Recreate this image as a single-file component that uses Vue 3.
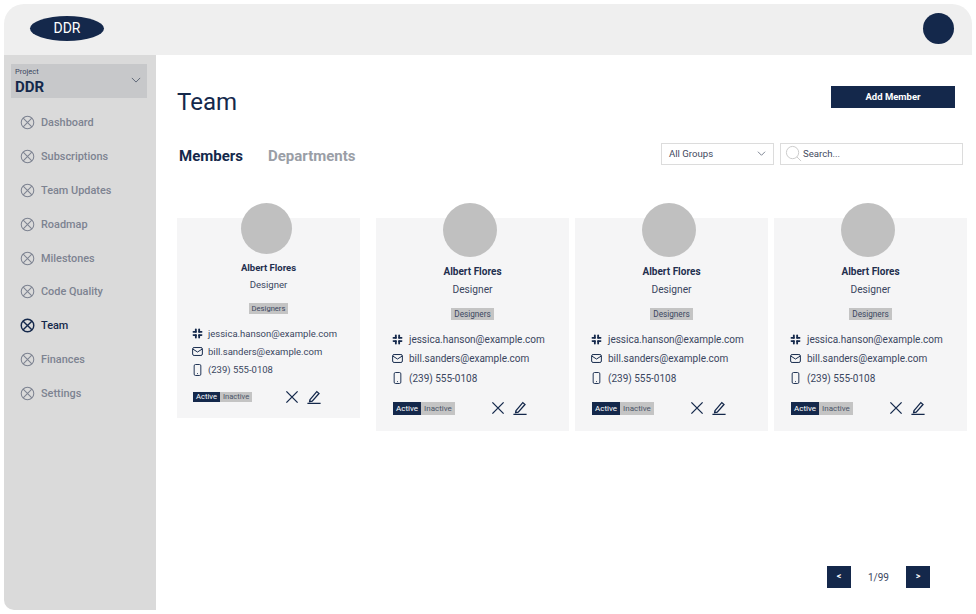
<template>
  <div class="frame">
    <header class="topbar">
      <div class="logo">DDR</div>
      <div class="user-avatar"></div>
    </header>

    <div class="body">
      <aside class="sidebar">
        <div class="project">
          <div>
            <div class="project-label">Project</div>
            <div class="project-name">DDR</div>
          </div>
          <svg class="chev" viewBox="0 0 12 7" width="10" height="6"><path d="M1 1l5 5 5-5"/></svg>
        </div>
        <nav class="nav">
          <a v-for="item in navItems" :key="item" class="nav-item" :class="{ active: item === 'Team' }">
            <svg viewBox="0 0 16 16" width="15" height="15">
              <circle cx="8" cy="8" r="6.7"/>
              <path d="M3.4 3.4l9.2 9.2M12.6 3.4l-9.2 9.2"/>
            </svg>
            <span>{{ item }}</span>
          </a>
        </nav>
      </aside>

      <main class="content">
        <div class="title-row">
          <h1>Team</h1>
          <button class="add-btn">Add Member</button>
        </div>

        <div class="tabs-row">
          <div class="tabs">
            <span class="tab current">Members</span>
            <span class="tab">Departments</span>
          </div>
          <div class="filters">
            <div class="select">
              <span>All Groups</span>
              <svg viewBox="0 0 12 7" width="9" height="5"><path d="M1 1l5 5 5-5"/></svg>
            </div>
            <div class="search">
              <svg viewBox="0 0 18 18" width="17" height="17">
                <circle cx="8" cy="8" r="6.5"/>
                <path d="M12.6 12.6l4.4 4.4"/>
              </svg>
              <span>Search...</span>
            </div>
          </div>
        </div>

        <div class="cards">
          <div v-for="(card, i) in cards" :key="i" class="card" :class="{ small: i === 0 }">
            <div class="avatar"></div>
            <div class="name">{{ card.name }}</div>
            <div class="role">{{ card.role }}</div>
            <span class="group">{{ card.group }}</span>
            <ul class="contacts">
              <li>
                <svg viewBox="0 0 12 12" width="11" height="11" class="slack">
                  <rect x="3.2" y="0.6" width="2" height="4.6" rx="1"/>
                  <rect x="0.6" y="3.4" width="4.6" height="1.8" rx="0.9"/>
                  <rect x="6.8" y="3.4" width="4.6" height="1.8" rx="0.9"/>
                  <rect x="6.8" y="0.6" width="2" height="4.6" rx="1"/>
                  <rect x="6.8" y="6.8" width="2" height="4.6" rx="1"/>
                  <rect x="6.8" y="6.8" width="4.6" height="1.8" rx="0.9"/>
                  <rect x="0.6" y="6.8" width="4.6" height="1.8" rx="0.9"/>
                  <rect x="3.2" y="6.8" width="2" height="4.6" rx="1"/>
                </svg>
                <span>{{ card.slack }}</span>
              </li>
              <li>
                <svg viewBox="0 0 12 10" width="11" height="9" class="line">
                  <rect x="0.6" y="0.6" width="10.8" height="8.8" rx="1.6"/>
                  <path d="M1 2.4l5 3.2 5-3.2"/>
                </svg>
                <span>{{ card.email }}</span>
              </li>
              <li>
                <svg viewBox="0 0 11 14" width="11" height="12" class="line">
                  <rect x="1.6" y="0.6" width="7.8" height="12.8" rx="1.6"/>
                  <path d="M5 11.2h1"/>
                </svg>
                <span>{{ card.phone }}</span>
              </li>
            </ul>
            <div class="card-foot">
              <div class="status">
                <span class="on">Active</span>
                <span class="off">Inactive</span>
              </div>
              <div class="actions">
                <svg viewBox="0 0 14 14" width="14" height="14" class="line thick"><path d="M1.4 1.4l11.2 11.2M12.6 1.4L1.4 12.6"/></svg>
                <svg viewBox="0 0 14 14" width="14" height="14" class="line thick">
                  <path d="M3 9.6L9.8 1.6l2.2 1.9-6.8 7.6-2.6.6z"/>
                  <path d="M0.4 13.4h13.2"/>
                </svg>
              </div>
            </div>
          </div>
        </div>

        <div class="pager">
          <button class="page-btn">&lt;</button>
          <span class="page-num">1/99</span>
          <button class="page-btn">&gt;</button>
        </div>
      </main>
    </div>
  </div>
</template>

<script setup>
const navItems = [
  'Dashboard',
  'Subscriptions',
  'Team Updates',
  'Roadmap',
  'Milestones',
  'Code Quality',
  'Team',
  'Finances',
  'Settings'
]

const member = {
  name: 'Albert Flores',
  role: 'Designer',
  group: 'Designers',
  slack: 'jessica.hanson@example.com',
  email: 'bill.sanders@example.com',
  phone: '(239) 555-0108'
}

const cards = [member, member, member, member]
</script>

<style>
html, body {
  margin: 0;
  background: #fff;
}
</style>

<style scoped>
.frame {
  width: 968px;
  height: 606px;
  margin: 4px 0 0 4px;
  border-radius: 20px 20px 0 10px;
  overflow: hidden;
  display: flex;
  flex-direction: column;
  font-family: Roboto, "Liberation Sans", sans-serif;
  color: #14284b;
  background: #fff;
}

/* Top bar */
.topbar {
  height: 51px;
  flex: none;
  box-sizing: border-box;
  background: #efefef;
  display: flex;
  align-items: center;
  justify-content: space-between;
  padding: 0 18px 2px 26px;
}

.logo {
  width: 74px;
  height: 25px;
  border-radius: 50%;
  background: #14284b;
  color: #fff;
  font-size: 14px;
  line-height: 25px;
  text-align: center;
}

.user-avatar {
  width: 31px;
  height: 31px;
  border-radius: 50%;
  background: #14284b;
}

.body {
  flex: 1;
  display: flex;
  min-height: 0;
}

/* Sidebar */
.sidebar {
  width: 152px;
  flex: none;
  background: #dadada;
  padding: 9px 9px 0 7px;
  box-sizing: border-box;
}

.project {
  height: 34px;
  background: #c7c8ca;
  display: flex;
  align-items: center;
  justify-content: space-between;
  padding: 0 6px 0 4px;
}

.project-label {
  font-size: 7.5px;
  line-height: 9px;
  color: #3a4660;
}

.project-name {
  margin-top: 3px;
  font-size: 15px;
  font-weight: 700;
  line-height: 17px;
}

.chev {
  margin-bottom: 3px;
  fill: none;
  stroke: #4b5568;
  stroke-width: 1;
}

.nav {
  margin-top: 8px;
  display: flex;
  flex-direction: column;
}

.nav-item {
  height: 33.8px;
  display: flex;
  align-items: center;
  gap: 6px;
  padding-left: 9px;
  font-size: 10.9px;
  font-weight: 500;
  color: #7d8391;
}

.nav-item svg {
  fill: none;
  stroke: currentColor;
  stroke-width: 1.1;
}

.nav-item.active {
  color: #14284b;
}

.nav-item.active svg {
  stroke-width: 1.5;
}

/* Main */
.content {
  flex: 1;
  min-width: 0;
  padding: 31px 5px 0 21px;
  position: relative;
  display: flex;
  flex-direction: column;
}

.title-row {
  display: flex;
  justify-content: space-between;
  align-items: flex-start;
  height: 59px;
}

h1 {
  margin: 0;
  font-size: 24px;
  font-weight: 400;
  line-height: 32px;
}

.add-btn {
  margin: 0 12px 0 0;
  width: 124px;
  height: 22px;
  border: none;
  padding: 0 0 2px;
  background: #14284b;
  color: #fff;
  font-family: inherit;
  font-size: 9.5px;
  font-weight: 700;
}

.tabs-row {
  display: flex;
  justify-content: space-between;
  align-items: center;
  height: 22px;
}

.tabs {
  display: flex;
  gap: 25px;
  padding-left: 2px;
}

.tab {
  font-size: 15px;
  font-weight: 700;
  color: #9a9ea6;
}

.tab.current {
  color: #14284b;
}

.filters {
  display: flex;
  gap: 6px;
  margin-top: -5px;
  padding-right: 4px;
}

.select,
.search {
  height: 22px;
  box-sizing: border-box;
  border: 1px solid #dcdcdc;
  background: #fff;
  display: flex;
  align-items: center;
  font-size: 9.6px;
  color: #3f4a60;
}

.select {
  width: 113px;
  padding: 0 7px;
  justify-content: space-between;
}

.select svg {
  fill: none;
  stroke: #4b5568;
  stroke-width: 1;
}

.search {
  width: 183px;
  padding-left: 4px;
  gap: 1px;
}

.search svg {
  fill: none;
  stroke: #c9c9c9;
  stroke-width: 1;
}

/* Cards */
.cards {
  margin-top: 51px;
  display: flex;
  align-items: flex-start;
  gap: 6px;
}

.card {
  width: 193px;
  height: 213px;
  box-sizing: border-box;
  background: #f5f5f6;
  display: flex;
  flex-direction: column;
  align-items: center;
  padding: 0 10px;
}

.avatar {
  width: 54px;
  height: 54px;
  border-radius: 50%;
  background: #c0c0c0;
  margin: -15px 5px 0 0;
  flex: none;
}

.name {
  margin-top: 8px;
  font-size: 10px;
  font-weight: 700;
  line-height: 13px;
  color: #1f2f4e;
}

.role {
  margin-top: 5px;
  font-size: 10.2px;
  line-height: 13px;
  color: #3a4660;
}

.group {
  margin-top: 12px;
  height: 12px;
  padding: 0 3px;
  background: #c4c4c4;
  font-size: 8.2px;
  line-height: 12px;
  color: #3a4660;
}

.contacts {
  list-style: none;
  margin: 10px 0 0;
  padding: 0 0 0 6px;
  align-self: stretch;
  font-size: 10px;
  color: #3a4660;
}

.contacts li {
  height: 19px;
  display: flex;
  align-items: center;
  gap: 6px;
}

.contacts li svg {
  flex: none;
}

.contacts li:last-child {
  height: 20px;
}

.slack {
  fill: #14284b;
}

.line {
  fill: none;
  stroke: #14284b;
  stroke-width: 1.1;
}

.line.thick {
  stroke-width: 1.3;
}

.card-foot {
  align-self: stretch;
  display: flex;
  justify-content: space-between;
  align-items: center;
  margin-top: 13px;
  padding: 0 32px 0 7px;
}

.status {
  display: flex;
  font-size: 8px;
  line-height: 13px;
}

.on {
  background: #14284b;
  color: #fff;
  padding: 0 3px;
}

.off {
  background: #c4c4c4;
  color: #4b5568;
  padding: 0 3px;
}

.actions {
  display: flex;
  gap: 8px;
}

/* first card is drawn a bit smaller */
.card.small {
  width: 183px;
  height: 200px;
  margin-right: 10px;
  padding: 0 9px;
}

.small .avatar {
  width: 51px;
  height: 51px;
}

.small .name {
  font-size: 9.5px;
  line-height: 12px;
}

.small .role {
  font-size: 9.6px;
  line-height: 12px;
}

.small .group {
  margin-top: 12px;
  height: 11px;
  font-size: 7.6px;
  line-height: 11px;
}

.small .contacts {
  margin-top: 10px;
  font-size: 9.5px;
}

.small .contacts li {
  height: 18px;
  gap: 5px;
}

.small .contacts li:last-child {
  height: 19px;
}

.small .card-foot {
  margin-top: 11px;
  padding-right: 30px;
}

.small .status {
  font-size: 7.6px;
  line-height: 10px;
}

/* Pager */
.pager {
  position: absolute;
  right: 42px;
  top: 511px;
  display: flex;
  align-items: center;
}

.page-btn {
  width: 24px;
  height: 22px;
  border: none;
  padding: 0 0 3px;
  background: #14284b;
  color: #fff;
  font-family: inherit;
  font-size: 9px;
  font-weight: 700;
}

.page-num {
  width: 55px;
  text-align: center;
  font-size: 10px;
  color: #3a4660;
}
</style>
